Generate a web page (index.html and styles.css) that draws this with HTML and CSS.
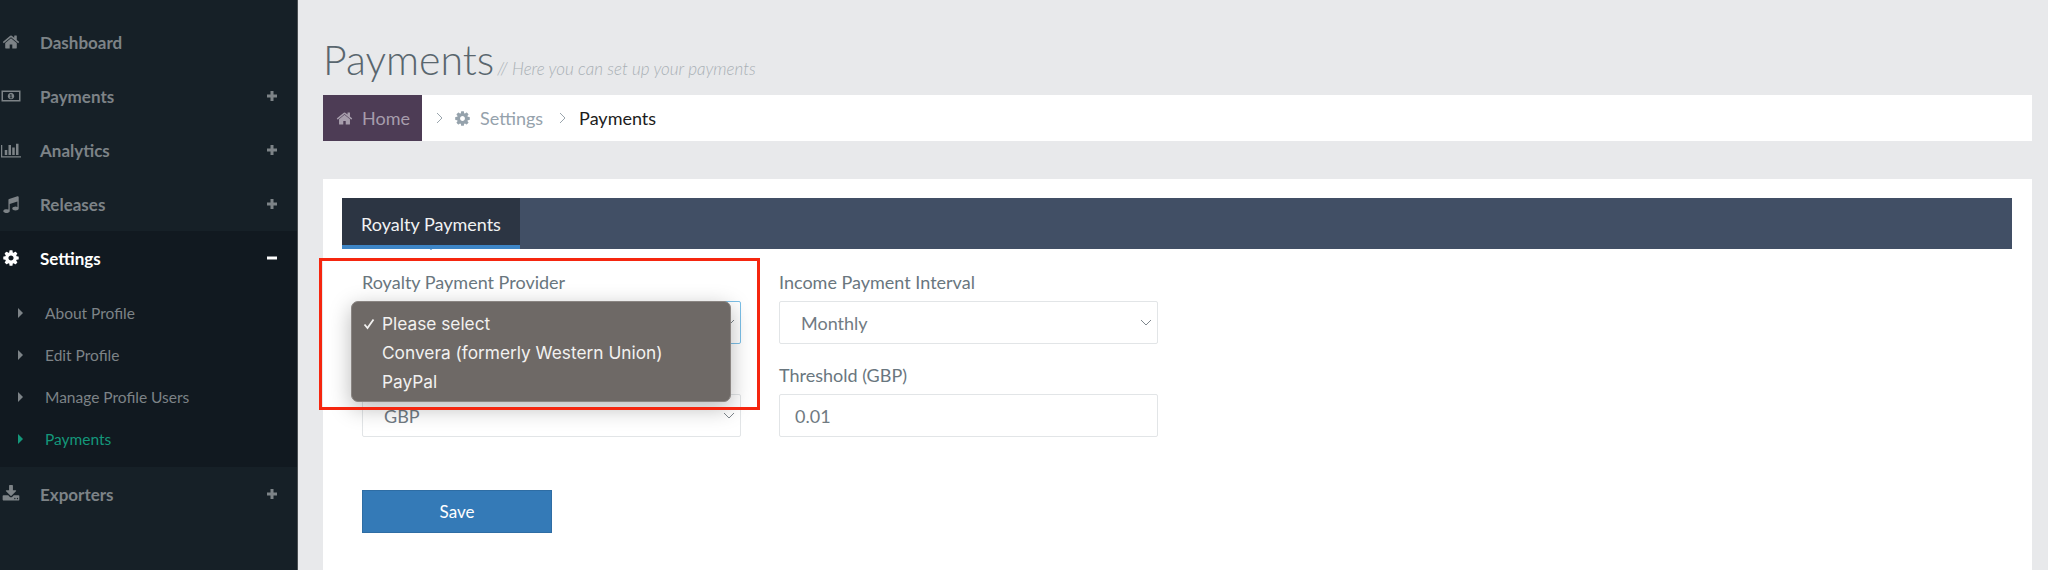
FILE: index.html
```html
<!DOCTYPE html>
<html lang="en">
<head>
<meta charset="utf-8">
<title>Payments</title>
<link rel="stylesheet" href="styles.css">
</head>
<body>
<svg class="defs" width="0" height="0" aria-hidden="true">
  <symbol id="i-home" viewBox="0 0 1792 1792"><path d="M1472 992v480q0 26-19 45t-45 19h-384v-384h-256v384h-384q-26 0-45-19t-19-45v-480q0-1 .5-3t.5-3l575-474 575 474q1 2 1 6zm223-69l-62 74q-8 9-21 11h-3q-13 0-21-7l-692-577-692 577q-12 8-24 7-13-2-21-11l-62-74q-8-10-7-23.5t11-21.5l719-599q32-26 76-26t76 26l244 204v-195q0-14 9-23t23-9h192q14 0 23 9t9 23v408l219 182q10 8 11 21.5t-7 23.5z"/></symbol>
  <symbol id="i-cog" viewBox="0 0 1792 1792"><path d="M1152 896q0-106-75-181t-181-75-181 75-75 181 75 181 181 75 181-75 75-181zm512-109v222q0 12-8 23t-20 13l-185 28q-19 54-39 91 35 50 107 138 10 12 10 25t-9 23q-27 37-99 108t-94 71q-12 0-26-9l-138-108q-44 23-91 38-16 136-29 186-7 28-36 28h-222q-14 0-24.5-8.5t-11.5-21.5l-28-184q-49-16-90-37l-141 107q-10 9-25 9-14 0-25-11-126-114-165-168-7-10-7-23 0-12 8-23 15-21 51-66.5t54-70.5q-27-50-41-99l-183-27q-13-2-21-12.5t-8-23.5v-222q0-12 8-23t19-13l186-28q14-46 39-92-40-57-107-138-10-12-10-24 0-10 9-23 26-36 98.5-107.5t94.5-71.5q13 0 26 10l138 107q44-23 91-38 16-136 29-186 7-28 36-28h222q14 0 24.5 8.5t11.5 21.5l28 184q49 16 90 37l142-107q9-9 24-9 13 0 25 10 129 119 165 170 7 8 7 22 0 12-8 23-15 21-51 66.5t-54 70.5q26 50 41 98l183 28q13 2 21 12.5t8 23.5z"/></symbol>
  <symbol id="i-money" viewBox="0 0 40 28"><path fill-rule="evenodd" d="M1 3h38v22H1zM4 6v16h32V6zM20 7.500a6.500 6.500 0 1 1-.01 0zM19 10.500l-2 1.500 1 1.200 1-.7v4.500h-1.500v1.300h5v-1.300H21v-6.500z"/></symbol>
  <symbol id="i-chart" viewBox="0 0 2048 1792"><path d="M640 896v512h-256v-512h256zm384-512v1024h-256v-1024h256zm1024 1152v128h-2048v-1280h128v1152h1920zm-640-896v768h-256v-768h256zm384-384v1152h-256v-1152h256z"/></symbol>
  <symbol id="i-music" viewBox="0 0 1792 1792"><path d="M1664 224v1120q0 50-34 89t-86 60.500-103.500 32-96.500 10.500-96.500-10.500-103.500-32-86-60.500-34-89 34-89 86-60.500 103.500-32 96.500-10.500q105 0 192 39v-537l-768 237v709q0 50-34 89t-86 60.500-103.500 32-96.500 10.500-96.500-10.500-103.500-32-86-60.500-34-89 34-89 86-60.500 103.500-32 96.500-10.500q105 0 192 39v-967q0-31 19-56.500t49-35.500l832-256q12-4 28-4 40 0 68 28t28 68z"/></symbol>
  <symbol id="i-download" viewBox="0 0 1792 1792"><path d="M1344 1344q0-26-19-45t-45-19-45 19-19 45 19 45 45 19 45-19 19-45zm256 0q0-26-19-45t-45-19-45 19-19 45 19 45 45 19 45-19 19-45zm128-224v320q0 40-28 68t-68 28h-1472q-40 0-68-28t-28-68v-320q0-40 28-68t68-28h465l135 136q58 56 136 56t136-56l136-136h464q40 0 68 28t28 68zm-325-569q17 41-14 70l-448 448q-18 19-45 19t-45-19l-448-448q-31-29-14-70 17-39 59-39h256v-448q0-26 19-45t45-19h256q26 0 45 19t19 45v448h256q42 0 59 39z"/></symbol>
  <symbol id="i-chev" viewBox="0 0 12 7"><path d="M1 1l5 5 5-5" fill="none" stroke="currentColor" stroke-width="1"/></symbol>
  <symbol id="i-next" viewBox="0 0 7 12"><path d="M1 1l5 5-5 5" fill="none" stroke="currentColor" stroke-width="1"/></symbol>
  <symbol id="i-plus" viewBox="0 0 12 12"><path d="M4.500 1h3v3.500H11v3H7.500V11h-3V7.500H1v-3h3.500z"/></symbol>
  <symbol id="i-minus" viewBox="0 0 12 12"><path d="M1 4.500h10v3H1z"/></symbol>
  <symbol id="i-tick" viewBox="0 0 12 12"><path d="M1.500 6.500l3 3.500 6-8.500" fill="none" stroke="currentColor" stroke-width="1.800"/></symbol>
</svg>

<div class="app">
  <aside class="sidebar">
    <a class="nav-row"><svg class="nav-icon"><use href="#i-home"/></svg><span class="nav-label">Dashboard</span></a>
    <a class="nav-row"><svg class="nav-icon"><use href="#i-money"/></svg><span class="nav-label">Payments</span><svg class="nav-sign"><use href="#i-plus"/></svg></a>
    <a class="nav-row"><svg class="nav-icon"><use href="#i-chart"/></svg><span class="nav-label">Analytics</span><svg class="nav-sign"><use href="#i-plus"/></svg></a>
    <a class="nav-row"><svg class="nav-icon"><use href="#i-music"/></svg><span class="nav-label">Releases</span><svg class="nav-sign"><use href="#i-plus"/></svg></a>
    <div class="nav-group">
      <a class="nav-row is-open"><svg class="nav-icon"><use href="#i-cog"/></svg><span class="nav-label">Settings</span><svg class="nav-sign"><use href="#i-minus"/></svg></a>
      <ul class="subnav">
        <li class="sub-row"><i class="caret"></i>About Profile</li>
        <li class="sub-row"><i class="caret"></i>Edit Profile</li>
        <li class="sub-row"><i class="caret"></i>Manage Profile Users</li>
        <li class="sub-row is-current"><i class="caret"></i>Payments</li>
      </ul>
    </div>
    <a class="nav-row"><svg class="nav-icon"><use href="#i-download"/></svg><span class="nav-label">Exporters</span><svg class="nav-sign"><use href="#i-plus"/></svg></a>
  </aside>

  <main class="main">
    <header class="page-head">
      <h1 class="page-title">Payments</h1>
      <span class="page-sub">// Here you can set up your payments</span>
    </header>

    <nav class="crumbs">
      <a class="crumb-home"><svg class="crumb-icon"><use href="#i-home"/></svg>Home</a>
      <svg class="crumb-sep crumb-sep-first"><use href="#i-next"/></svg>
      <a class="crumb-link"><svg class="crumb-icon"><use href="#i-cog"/></svg>Settings</a>
      <svg class="crumb-sep crumb-sep-last"><use href="#i-next"/></svg>
      <span class="crumb-now">Payments</span>
    </nav>

    <section class="panel">
      <div class="tabs"><div class="tab">Royalty Payments</div></div>
      <form class="form">
        <div class="form-grid">
          <div class="field">
            <label class="field-label">Royalty Payment Provider</label>
            <div class="select is-focus"><span></span><svg class="chev"><use href="#i-chev"/></svg></div>
          </div>
          <div class="field">
            <label class="field-label">Income Payment Interval</label>
            <div class="select"><span>Monthly</span><svg class="chev"><use href="#i-chev"/></svg></div>
          </div>
          <div class="field">
            <label class="field-label"></label>
            <div class="select"><span>GBP</span><svg class="chev"><use href="#i-chev"/></svg></div>
          </div>
          <div class="field">
            <label class="field-label">Threshold (GBP)</label>
            <input class="input" type="text" value="0.01">
          </div>
        </div>
        <button class="save" type="button">Save</button>
      </form>

      <ul class="popup">
        <li class="popup-item"><svg class="tick"><use href="#i-tick"/></svg>Please select</li>
        <li class="popup-item">Convera (formerly Western Union)</li>
        <li class="popup-item">PayPal</li>
      </ul>
      <div class="annot"></div>
    </section>
  </main>
</div>
</body>
</html>
```

FILE: styles.css
```css
* { box-sizing: border-box; }
html, body { margin: 0; height: 100%; }
body { font-family: "Lato", "Liberation Sans", sans-serif; background: #e8e9eb; overflow: hidden; }
.defs { position: absolute; }

.app { display: flex; height: 570px; overflow: hidden; }

/* Sidebar */
.sidebar { width: 298px; flex: none; background: #162027; padding-top: 15px; border-right: 1px solid #4a4f53; }
.nav-row { display: flex; align-items: center; height: 54px; color: #7d8387; font-size: 17px; font-weight: 700; }
.nav-icon { width: 20px; height: 18px; margin-left: 1px; margin-right: 19px; fill: currentColor; flex: none; }
.nav-label { flex: 1; }
.nav-sign { width: 12px; height: 12px; margin-right: 19px; fill: currentColor; flex: none; }
.nav-group { background: #111920; }
.nav-row.is-open { color: #fff; }
.subnav { list-style: none; margin: 0; padding: 7px 0 7px; }
.sub-row { display: flex; align-items: center; height: 42px; padding-left: 18px; color: #7d8387; font-size: 15.5px; }
.caret { width: 0; height: 0; margin-right: 22px; border-left: 5px solid currentColor; border-top: 5px solid transparent; border-bottom: 5px solid transparent; }
.sub-row.is-current { color: #14977a; }

/* Main column */
.main { flex: 1; min-width: 0; padding: 0 16px 0 25px; }
.page-head { display: flex; align-items: baseline; gap: 3px; height: 95px; padding-top: 34px; }
.page-title { margin: 0; font-size: 41px; font-weight: 300; line-height: 52px; color: #59666e; }
.page-sub { font-size: 17px; font-weight: 300; font-style: italic; color: #a8b0b5; }

.crumbs { display: flex; align-items: center; height: 46px; background: #fff; font-size: 18px; }
.crumb-home { display: flex; align-items: center; align-self: stretch; width: 99px; padding-left: 13px; background: #4d3c55; color: #a79dac; }
.crumb-icon { width: 17px; height: 17px; margin-right: 9px; fill: currentColor; flex: none; }
.crumb-sep { width: 7px; height: 12px; color: #9aa5ad; flex: none; }
.crumb-sep-first { margin: 0 11px 0 14px; }
.crumb-sep-last { margin: 0 13px 0 16px; }
.crumb-link { display: flex; align-items: center; color: #95a2ac; }
.crumb-now { color: #1c1c1c; }

.panel { position: relative; margin-top: 38px; height: 400px; padding: 19px 20px 0 19px; background: #fff; }
.tabs { display: flex; height: 51px; background: #414f65; }
.tab { position: relative; width: 178px; display: flex; align-items: center; justify-content: center; padding-top: 4px; background: #2c3543; border-bottom: 4px solid #3d85c6; color: #f1f2f3; font-size: 18px; }
.tab::after { content: ""; position: absolute; left: 83px; top: 100%; border: 6px solid transparent; border-top: 5px solid #3d85c6; border-bottom: 0; }

.form { padding: 22px 0 0 20px; }
.form-grid { display: grid; grid-template-columns: 379px 379px; column-gap: 38px; row-gap: 20px; }
.field { display: flex; flex-direction: column; }
.field-label { height: 30px; color: #69767e; font-size: 18px; line-height: 22px; }
.select, .input { width: 100%; height: 43px; background: #fff; border: 1px solid #e2e5e7; border-radius: 2px; color: #707a82; font-family: inherit; font-size: 18px; }
.select { display: flex; align-items: center; justify-content: space-between; padding: 0 5px 0 21px; }
.select.is-focus { border-color: #7cc0e8; }
.input { padding: 0 15px; outline: none; }
.chev { width: 12px; height: 7px; color: #7e878d; }

.save { display: block; width: 190px; height: 43px; margin-top: 53px; padding: 0; background: #347ab7; border: 1px solid #2e6da4; color: #fff; font-family: inherit; font-size: 17px; }

/* Overlays */
.popup { position: absolute; left: 28px; top: 122px; width: 380px; height: 101px; margin: 0; padding: 6.5px 0 0; list-style: none; background: #6e6966; border: 1px solid #8a8582; border-radius: 7px; box-shadow: 0 6px 22px rgba(0,0,0,.28); color: #f2f1f0; font-family: "Inter", "Liberation Sans", sans-serif; font-size: 17.3px; }
.popup-item { position: relative; height: 29px; padding-left: 30px; line-height: 29px; white-space: nowrap; }
.tick { position: absolute; left: 11px; top: 9px; width: 12px; height: 12px; }
.annot { position: absolute; left: -4px; top: 79px; width: 441px; height: 152px; border: 3px solid #f5260f; pointer-events: none; }
```
